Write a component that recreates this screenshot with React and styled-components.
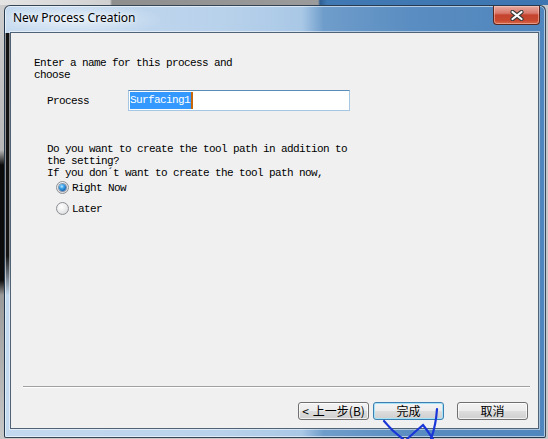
import React from "react";
import styled, { createGlobalStyle, css } from "styled-components";

const GlobalStyle = createGlobalStyle`
  html, body {
    margin: 0;
    padding: 0;
    width: 548px;
    height: 439px;
    overflow: hidden;
  }
`;

const Desktop = styled.div`
  position: relative;
  width: 548px;
  height: 439px;
  box-sizing: border-box;
  padding: 5px 0 0 4px;
  background:
    linear-gradient(90deg, #e4e4e4 0, #d0d0d0 110px, #8e8e8e 112px, #9b9b9b 318px, #2f5f92 320px, #3f78b2 327px, #3d76b0 100%) 0 0 / 100% 5px no-repeat,
    linear-gradient(#cfcfcf 0, #b8b8b8 150px, #0c0c0c 165px, #0c0c0c 280px, #9a9a9a 295px, #c8c8c8 100%) 0 0 / 4px 100% no-repeat,
    #c9c9c9;
`;

const Window = styled.div`
  width: 542px;
  height: 433px;
  box-sizing: border-box;
  display: flex;
  flex-direction: column;
  border: 1px solid rgba(30, 45, 60, 0.85);
  border-radius: 6px 6px 2px 2px;
  padding: 0 6px 8px 5px;
  box-shadow: inset 0 0 0 1px rgba(255, 255, 255, 0.55);
  background:
    linear-gradient(#121212, #151515 85%, rgba(20, 20, 20, 0)) 0 27px / 5px 262px no-repeat,
    radial-gradient(ellipse 90px 18px at 70px 14px, rgba(255, 255, 255, 0.55), rgba(255, 255, 255, 0)),
    linear-gradient(90deg, #c3d9ef 0%, #b9d2eb 40%, #a9c8e6 55%, #6f9dcb 59%, #5a8dc1 75%, #4f86bd 100%);
`;

const TitleBar = styled.div`
  height: 26px;
  display: flex;
  align-items: flex-start;
  justify-content: space-between;
`;

const Title = styled.div`
  padding: 3px 0 0 3px;
  font-family: "Noto Sans", "Open Sans", sans-serif;
  font-size: 12px;
  line-height: 18px;
  color: #000;
  text-shadow: 0 0 6px rgba(255, 255, 255, 0.9), 0 0 3px rgba(255, 255, 255, 0.8);
`;

const CloseButton = styled.div`
  width: 47px;
  height: 19px;
  margin-right: -1px;
  box-sizing: border-box;
  display: flex;
  align-items: center;
  justify-content: center;
  border: 1px solid #5a2620;
  border-top: none;
  border-radius: 0 0 4px 4px;
  background: linear-gradient(#e8a99e 0%, #d9786a 40%, #c4432e 50%, #c8482f 80%, #d86a4c 100%);
  box-shadow: inset 0 0 0 1px rgba(255, 220, 210, 0.45);
`;

const Client = styled.div`
  flex: 1;
  display: flex;
  flex-direction: column;
  background: #f0f0f0;
  border: 1px solid #4f6276;
  box-shadow: 0 0 0 1px rgba(255, 255, 255, 0.5);
  font-family: "Liberation Mono", "Noto Sans CJK SC", monospace;
  font-size: 11px;
  letter-spacing: -0.6px;
  line-height: 12px;
  color: #000;
`;

const Paragraph = styled.div`
  margin: ${({ $top }) => $top}px 0 0 ${({ $left }) => $left}px;
  white-space: pre;
`;

const FieldRow = styled.div`
  display: flex;
  align-items: center;
  margin: 9px 0 0 36px;
`;

const FieldLabel = styled.div`
  width: 81px;
`;

const TextBox = styled.div`
  width: 222px;
  height: 21px;
  box-sizing: border-box;
  display: flex;
  align-items: center;
  padding-left: 1px;
  background: #fff;
  border: 1px solid #a5c7e4;
  border-top-color: #5b8bb7;
`;

const Selection = styled.span`
  background: #3399ff;
  color: #fff;
  line-height: 17px;
  padding-right: 1px;
  border-right: 2px solid #c8670a;
`;

const RadioGroup = styled.div`
  display: flex;
  flex-direction: column;
  gap: 8px;
  margin: 2px 0 0 45px;
`;

const RadioRow = styled.label`
  display: flex;
  align-items: center;
  gap: 3px;
  height: 13px;
`;

const RadioCircle = styled.span`
  width: 13px;
  height: 13px;
  box-sizing: border-box;
  border-radius: 50%;
  border: 1px solid #8c8f94;
  background: radial-gradient(circle at 40% 35%, #ffffff 0%, #f0f0f0 40%, #cfd1d4 100%);
  display: flex;
  align-items: center;
  justify-content: center;

  ${({ $checked }) =>
    $checked &&
    css`
      &::after {
        content: "";
        width: 7px;
        height: 7px;
        border-radius: 50%;
        background: radial-gradient(circle at 40% 35%, #bfe8ff 0%, #3aa2e6 35%, #0e58a8 80%, #0a3f80 100%);
        box-shadow: 0 0 0 1px rgba(20, 60, 110, 0.5);
      }
    `}
`;

const Spacer = styled.div`
  flex: 1;
`;

const Separator = styled.div`
  margin: 0 8px 0 12px;
  height: 1px;
  background: #a0a0a0;
  border-bottom: 1px solid #ffffff;
`;

const ButtonBar = styled.div`
  display: flex;
  justify-content: flex-end;
  margin: 14px 10px 8px 0;
`;

const Button = styled.div`
  width: 71px;
  height: 18px;
  box-sizing: border-box;
  margin-left: ${({ $gap }) => $gap}px;
  display: flex;
  align-items: center;
  justify-content: center;
  gap: 4px;
  border-radius: 3px;
  border: 1px solid ${({ $focused }) => ($focused ? "#3c7fb1" : "#707070")};
  background: linear-gradient(#f3f3f3 0%, #ececec 48%, #dddddd 52%, #cfcfcf 100%);
  box-shadow: inset 0 0 0 1px ${({ $focused }) => ($focused ? "#a6e2f8" : "rgba(255,255,255,0.7)")};
  font-family: "Noto Sans CJK SC", "Liberation Sans", sans-serif;
  font-size: 12px;
  letter-spacing: 0;
  line-height: 14px;
  color: #000;
`;

const Scribble = styled.svg`
  position: absolute;
  left: 0;
  top: 0;
  pointer-events: none;
`;

const CloseGlyph = () => (
  <svg width="14" height="11" viewBox="0 0 14 11">
    <path d="M2.5 2 L11.5 9 M11.5 2 L2.5 9" stroke="#3b3b3b" strokeWidth="4.2" strokeLinecap="round" />
    <path d="M2.5 2 L11.5 9 M11.5 2 L2.5 9" stroke="#ffffff" strokeWidth="2.2" strokeLinecap="round" />
  </svg>
);

const Radio = ({ checked, label }) => (
  <RadioRow>
    <RadioCircle $checked={checked} />
    <span>{label}</span>
  </RadioRow>
);

const App = () => (
  <>
    <GlobalStyle />
    <Desktop>
      <Window>
        <TitleBar>
          <Title>New Process Creation</Title>
          <CloseButton>
            <CloseGlyph />
          </CloseButton>
        </TitleBar>
        <Client>
          <Paragraph $top={24} $left={23}>{"Enter a name for this process and\nchoose"}</Paragraph>
          <FieldRow>
            <FieldLabel>Process</FieldLabel>
            <TextBox>
              <Selection>Surfacing1</Selection>
            </TextBox>
          </FieldRow>
          <Paragraph $top={32} $left={36}>
            {"Do you want to create the tool path in addition to\nthe setting?\nIf you don\u00b4t want to create the tool path now,"}
          </Paragraph>
          <RadioGroup>
            <Radio checked label="Right Now" />
            <Radio label="Later" />
          </RadioGroup>
          <Spacer />
          <Separator />
          <ButtonBar>
            <Button $gap={0}>
              <span>&lt;</span>
              <span>上一步(B)</span>
            </Button>
            <Button $gap={4} $focused>完成</Button>
            <Button $gap={13}>取消</Button>
          </ButtonBar>
        </Client>
      </Window>
      <Scribble width="548" height="439" viewBox="0 0 548 439">
        <path
          d="M384 421 Q392 431 403 439 M407 439 Q416 431 423 425 Q427 430 433 439 M431 439 Q436 425 437 409"
          fill="none"
          stroke="#1a36d8"
          strokeWidth="2.2"
          strokeLinecap="round"
        />
      </Scribble>
    </Desktop>
  </>
);

export default App;
